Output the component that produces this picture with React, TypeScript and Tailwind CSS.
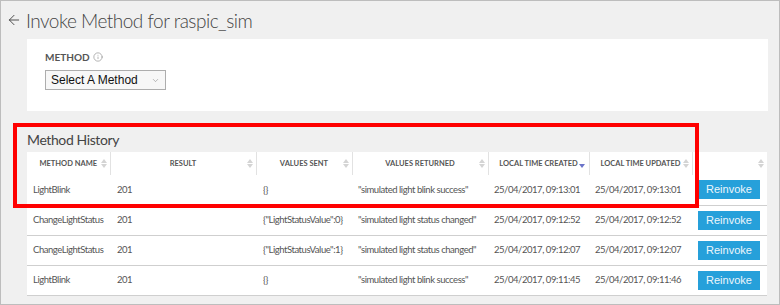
import { ArrowLeft, Info, ChevronDown } from 'lucide-react'

type Row = {
  name: string
  result: string
  sent: string
  returned: string
  created: string
  updated: string
}

const rows: Row[] = [
  { name: 'LightBlink', result: '201', sent: '{}', returned: '"simulated light blink success"', created: '25/04/2017, 09:13:01', updated: '25/04/2017, 09:13:01' },
  { name: 'ChangeLightStatus', result: '201', sent: '{"LightStatusValue":0}', returned: '"simulated light status changed"', created: '25/04/2017, 09:12:52', updated: '25/04/2017, 09:12:52' },
  { name: 'ChangeLightStatus', result: '201', sent: '{"LightStatusValue":1}', returned: '"simulated light status changed"', created: '25/04/2017, 09:12:07', updated: '25/04/2017, 09:12:07' },
  { name: 'LightBlink', result: '201', sent: '{}', returned: '"simulated light blink success"', created: '25/04/2017, 09:11:45', updated: '25/04/2017, 09:11:46' },
]

const columns = [
  { label: 'Method Name', w: 'w-[83px]' },
  { label: 'Result', w: 'w-[146px]' },
  { label: 'Values Sent', w: 'w-[96px]' },
  { label: 'Values Returned', w: 'w-[136px]' },
  { label: 'Local Time Created', w: 'w-[101px]', sorted: true },
  { label: 'Local Time Updated', w: 'w-[103px]' },
  { label: '', w: 'w-[75px]' },
]

function SortIcon({ active }: { active?: boolean }) {
  if (active) {
    return (
      <svg width="6" height="8" viewBox="0 0 6 8" className="absolute right-[4px] top-[9px]">
        <path d="M0 3 L6 3 L3 7 Z" fill="#6b74c9" />
      </svg>
    )
  }
  return (
    <svg width="6" height="9" viewBox="0 0 6 9" className="absolute right-[3px] top-[7px]">
      <path d="M0 4 L6 4 L3 0 Z" fill="#d4d4d4" />
      <path d="M0 5 L6 5 L3 9 Z" fill="#d4d4d4" />
    </svg>
  )
}

export default function App() {
  return (
    <div className="relative w-[780px] h-[305px] bg-[#f0f0f0] border border-[#bdbdbd] overflow-hidden font-['Lato',sans-serif]">
      <div className="flex items-center h-[38px] pl-[5px] gap-[4px] text-[#444]">
        <ArrowLeft className="w-[16px] h-[16px]" strokeWidth={1.4} />
        <h1 className="text-[19px] font-light leading-none tracking-[-0.5px]">Invoke Method for raspic_sim</h1>
      </div>

      <div className="ml-[26px] mr-[11px] h-[72px] bg-white pt-[13px] pl-[18px]">
        <div className="flex items-center gap-[3px] text-[10px] font-bold text-[#555] leading-none">
          METHOD <Info className="w-[10px] h-[10px] text-[#888]" strokeWidth={1.5} />
        </div>
        <div className="mt-[8px] w-[121px] h-[20px] flex items-center justify-between px-[5px] border border-[#adadad] bg-[#f7f7f7] font-['Liberation_Sans',sans-serif] text-[12px] text-[#111]">
          <span>Select A Method</span>
          <ChevronDown className="w-[9px] h-[9px] text-[#888]" strokeWidth={1.5} />
        </div>
      </div>

      <div className="ml-[26px] mr-[11px] mt-[22px]">
        <div className="text-[14px] text-[#444] leading-none h-[19px] tracking-[-0.4px]">Method History</div>
        <table className="table-fixed border-collapse w-[740px] bg-white">
          <thead>
            <tr className="h-[23px]">
              {columns.map((c, i) => (
                <th
                  key={i}
                  className={`${c.w} relative p-0 text-[7.5px] font-bold uppercase text-[#555] text-center ${i < 6 ? 'border-r border-[#e2e2e2]' : ''}`}
                >
                  {c.label}
                  <SortIcon active={c.sorted} />
                </th>
              ))}
            </tr>
          </thead>
          <tbody className="text-[9.5px] tracking-[-0.45px] text-[#555]">
            {rows.map((r, i) => (
              <tr key={i} className="h-[30px] border-b border-[#cfcfcf]">
                <td className="pl-[6px] whitespace-nowrap">{r.name}</td>
                <td className="pl-[7px]">{r.result}</td>
                <td className="pl-[7px] whitespace-nowrap">{r.sent}</td>
                <td className="pl-[6px] whitespace-nowrap">{r.returned}</td>
                <td className="pl-[6px] whitespace-nowrap">{r.created}</td>
                <td className="pl-[6px] whitespace-nowrap">{r.updated}</td>
                <td className="pl-[6px]">
                  <button className="w-[62px] h-[19px] bg-[#26a0da] text-[#eef6fb] text-[11px] tracking-normal font-['Liberation_Sans',sans-serif] leading-none">
                    Reinvoke
                  </button>
                </td>
              </tr>
            ))}
          </tbody>
        </table>
      </div>

      <div className="absolute left-[12px] top-[122px] w-[686px] h-[85px] border-[4px] border-[#ff0000] pointer-events-none" />
    </div>
  )
}
